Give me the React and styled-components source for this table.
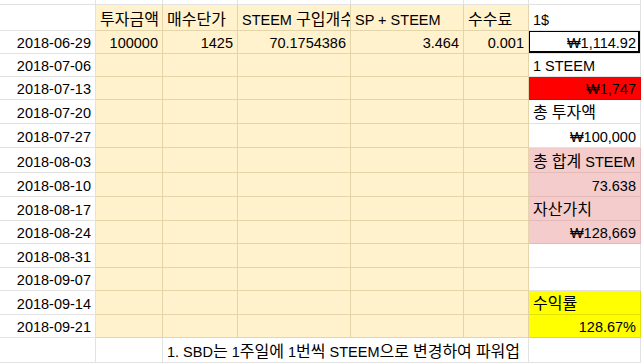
import styled, { createGlobalStyle } from 'styled-components';

const COLUMNS = '96px 67px 75px 113px 113px 65px 112px';

const fills = {
  white: { bg: '#ffffff', line: '#e2e2e2' },
  beige: { bg: '#fff2cc', line: '#e3d4a9' },
  pink: { bg: '#f4cccc', line: '#e4b9b9' },
  red: { bg: '#ff0000', line: '#e60000' },
  yellow: { bg: '#ffff00', line: '#e2e200' },
};

const rows = [
  { date: '2018-06-29', h: 23, values: ['100000', '1425', '70.1754386', '3.464', '0.001'], side: { text: '₩1,114.92', right: true, selected: true } },
  { date: '2018-07-06', h: 23, side: { text: '1 STEEM' } },
  { date: '2018-07-13', h: 23, side: { text: '₩1,747', right: true, fill: 'red' } },
  { date: '2018-07-20', h: 24, side: { text: '총 투자액' } },
  { date: '2018-07-27', h: 24, side: { text: '₩100,000', right: true } },
  { date: '2018-08-03', h: 25, side: { text: '총 합계 STEEM', fill: 'pink' } },
  { date: '2018-08-10', h: 24, side: { text: '73.638', right: true, fill: 'pink' } },
  { date: '2018-08-17', h: 24, side: { text: '자산가치', fill: 'pink' } },
  { date: '2018-08-24', h: 23, side: { text: '₩128,669', right: true, fill: 'pink' } },
  { date: '2018-08-31', h: 24, side: { text: '' } },
  { date: '2018-09-07', h: 23, side: { text: '' } },
  { date: '2018-09-14', h: 24, side: { text: '수익률', fill: 'yellow' } },
  { date: '2018-09-21', h: 23, side: { text: '128.67%', right: true, fill: 'yellow' } },
];

const headers = ['투자금액', '매수단가', 'STEEM 구입개수', 'SP + STEEM', '수수료'];

// Korean runs render wider in the sheet than the CJK fallback does, so give them their own size
function Text({ children }) {
  if (!children) return null;
  return (
    <Line>
      {children.split(/([\uAC00-\uD7A3]+)/).map((part, i) =>
        /[\uAC00-\uD7A3]/.test(part) ? <Hangul key={i}>{part}</Hangul> : part
      )}
    </Line>
  );
}

export default function App() {
  return (
    <>
      <GlobalStyle />
      <Sheet>
        <Row $h={5}>
          {Array.from({ length: 7 }).map((_, i) => (
            <Cell key={i} />
          ))}
        </Row>
        <Row $h={26}>
          <Cell />
          {headers.map((label) => (
            <Cell key={label} $fill="beige">
              <Text>{label}</Text>
            </Cell>
          ))}
          <Cell>1$</Cell>
        </Row>
        {rows.map((row) => (
          <Row key={row.date} $h={row.h}>
            <Cell $right>{row.date}</Cell>
            {[0, 1, 2, 3, 4].map((i) => (
              <Cell key={i} $fill="beige" $right>
                {row.values ? row.values[i] : ''}
              </Cell>
            ))}
            <Cell $fill={row.side.fill} $right={row.side.right}>
              <Text>{row.side.text}</Text>
              {row.side.selected && <Selection />}
            </Cell>
          </Row>
        ))}
        <Row $h={25}>
          <Cell />
          <Cell />
          <Cell $span={4}>
            <Text>1. SBD는 1주일에 1번씩 STEEM으로 변경하여 파워업</Text>
          </Cell>
          <Cell />
        </Row>
      </Sheet>
    </>
  );
}

const GlobalStyle = createGlobalStyle`
  body {
    margin: 0;
    background: #ffffff;
    font-family: "Liberation Sans", Arial, "Noto Sans CJK KR", sans-serif;
  }
`;

const Sheet = styled.div`
  width: 644px;
  height: 363px;
  overflow: hidden;
`;

const Row = styled.div`
  display: grid;
  grid-template-columns: ${COLUMNS};
  height: ${(p) => p.$h}px;
`;

const Cell = styled.div`
  position: relative;
  box-sizing: border-box;
  grid-column: span ${(p) => p.$span || 1};
  display: flex;
  align-items: flex-end;
  justify-content: ${(p) => (p.$right ? 'flex-end' : 'flex-start')};
  padding: 0 4px 1px 4px;
  background: ${(p) => fills[p.$fill || 'white'].bg};
  border-right: 1px solid ${(p) => fills[p.$fill || 'white'].line};
  border-bottom: 1px solid ${(p) => fills[p.$fill || 'white'].line};
  color: #000;
  font-size: 14.5px;
  line-height: 18px;
  white-space: pre;
  overflow: hidden;
`;

const Line = styled.span`
  flex: none;
`;

const Hangul = styled.span`
  font-family: "Noto Sans CJK KR", sans-serif;
  font-size: 16px;
  line-height: 18px;
`;

const Selection = styled.span`
  position: absolute;
  top: -1px;
  left: -1px;
  right: 0;
  bottom: 0;
  border: 2px solid #000;
  pointer-events: none;
`;
